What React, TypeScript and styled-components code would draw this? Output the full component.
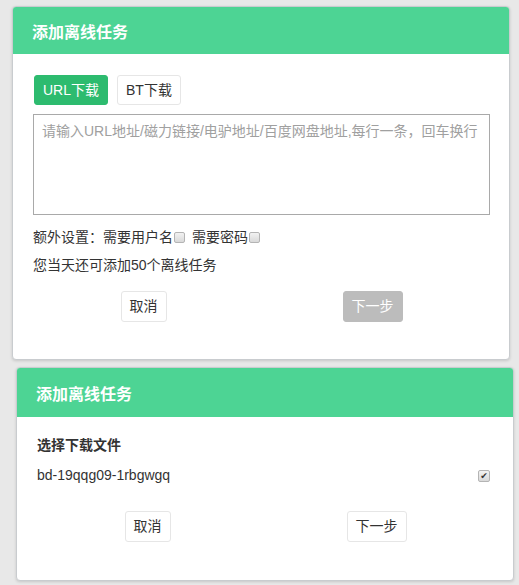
import styled, { createGlobalStyle } from "styled-components";

const GlobalStyle = createGlobalStyle`
  html, body {
    margin: 0;
    padding: 0;
    background: #e8e8e8;
    font-family: "Liberation Sans", "Noto Sans CJK SC", sans-serif;
    font-size: 14px;
    color: #333;
  }
  * {
    box-sizing: border-box;
  }
`

const Page = styled.div`
  display: flex;
  flex-direction: column;
  width: 519px;
  height: 585px;
  padding-top: 6px;
  gap: 7px;
`

const Panel = styled.div<{ $offset: number }>`
  width: 498px;
  margin-left: ${p => p.$offset}px;
  background: #fff;
  border: 1px solid #c9cccf;
  border-radius: 4px;
  box-shadow: 0 1px 3px rgba(0, 0, 0, 0.15);
  overflow: hidden;
`

const Header = styled.div<{ $height: number }>`
  display: flex;
  align-items: center;
  height: ${p => p.$height}px;
  padding: 0 19px;
  background: #4dd494;
  color: #fff;
  font-size: 16px;
  font-weight: bold;
`

const Body = styled.div<{ $top: number; $bottom: number }>`
  display: flex;
  flex-direction: column;
  padding: ${p => p.$top}px 20px ${p => p.$bottom}px;
`

const Tabs = styled.div`
  display: flex;
  gap: 9px;
  margin-left: 1px;
  margin-bottom: 9px;
`

const Tab = styled.button<{ $active?: boolean }>`
  height: 30px;
  padding: 0 8px;
  border: 1px solid ${p => (p.$active ? "#2dbb6f" : "#e6e6e6")};
  border-radius: 3px;
  background: ${p => (p.$active ? "#2dbb6f" : "#fff")};
  color: ${p => (p.$active ? "#fff" : "#333")};
  font: inherit;
  font-size: 14px;
  line-height: 28px;
`

const Links = styled.textarea`
  width: 457px;
  height: 101px;
  padding: 6px 8px;
  margin: 0;
  border: 1px solid #a9a9a9;
  resize: none;
  font: inherit;
  font-size: 14px;
  line-height: 20px;
  color: #333;
  outline: 0;
  &::placeholder {
    color: #a0a0a0;
  }
`

const Line = styled.div<{ $top: number }>`
  display: flex;
  align-items: center;
  height: 20px;
  margin-top: ${p => p.$top}px;
  line-height: 20px;
  white-space: nowrap;
`

const Title = styled(Line)`
  font-weight: bold;
`

const FileRow = styled(Line)`
  justify-content: space-between;
  padding-right: 2px;
`

const Option = styled.label`
  display: flex;
  align-items: center;
  margin-right: 6px;
`

const Check = styled.input<{ $size: number }>`
  appearance: none;
  position: relative;
  width: ${p => p.$size}px;
  height: ${p => p.$size}px;
  margin: 1px 1px 0;
  border: 1px solid #b4b4b4;
  border-radius: 2px;
  background: linear-gradient(#f2f2f2, #d9d9d9);
  &:checked::after {
    content: "✔";
    position: absolute;
    inset: 0;
    display: flex;
    align-items: center;
    justify-content: center;
    font-family: "DejaVu Sans", sans-serif;
    font-size: 9px;
    color: #333;
  }
`

const Actions = styled.div<{ $top: number }>`
  display: grid;
  grid-template-columns: 1fr 1fr;
  justify-items: center;
  width: 458px;
  margin: ${p => p.$top}px 0 0 -4px;
`

const Action = styled.button<{ $disabled?: boolean }>`
  height: 31px;
  padding: 0 8px;
  border: 1px solid ${p => (p.$disabled ? "#bcbcbc" : "#e6e6e6")};
  border-radius: 3px;
  background: ${p => (p.$disabled ? "#bcbcbc" : "#fff")};
  color: ${p => (p.$disabled ? "#fff" : "#333")};
  font: inherit;
  font-size: 14px;
  line-height: 29px;
`

function App() {
  return (
    <>
      <GlobalStyle />
      <Page>
        <Panel $offset={12}>
          <Header $height={47}>添加离线任务</Header>
          <Body $top={21} $bottom={37}>
            <Tabs>
              <Tab $active>URL下载</Tab>
              <Tab>BT下载</Tab>
            </Tabs>
            <Links placeholder="请输入URL地址/磁力链接/电驴地址/百度网盘地址,每行一条，回车换行" />
            <Line $top={12}>
              额外设置：
              <Option>需要用户名<Check $size={11} type="checkbox" /></Option>
              <Option>需要密码<Check $size={11} type="checkbox" /></Option>
            </Line>
            <Line $top={8}>您当天还可添加50个离线任务</Line>
            <Actions $top={16}>
              <Action>取消</Action>
              <Action $disabled>下一步</Action>
            </Actions>
          </Body>
        </Panel>
        <Panel $offset={16}>
          <Header $height={49}>添加离线任务</Header>
          <Body $top={18} $bottom={38}>
            <Title $top={0}>选择下载文件</Title>
            <FileRow $top={10}>
              bd-19qqg09-1rbgwgq
              <Check $size={12} type="checkbox" defaultChecked />
            </FileRow>
            <Actions $top={26}>
              <Action>取消</Action>
              <Action>下一步</Action>
            </Actions>
          </Body>
        </Panel>
      </Page>
    </>
  );
}

export default App
